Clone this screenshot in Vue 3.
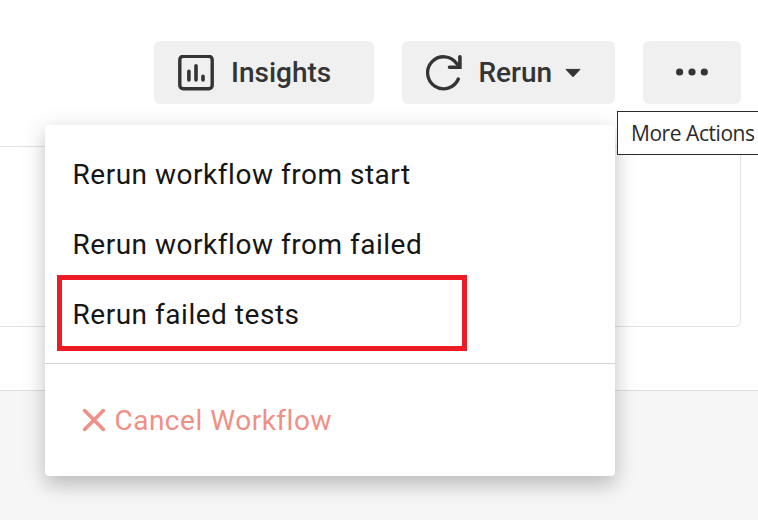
<script setup>
const rerunOptions = [
  { label: 'Rerun workflow from start' },
  { label: 'Rerun workflow from failed' },
  { label: 'Rerun failed tests', highlighted: true },
]
</script>

<template>
  <div class="page">
    <header class="toolbar">
      <button class="btn insights" type="button">
        <svg class="icon" viewBox="0 0 36 36" width="36" height="36">
          <rect x="1.8" y="1.3" width="32.4" height="32.4" rx="3.4" fill="none" stroke="#343434" stroke-width="3.4" />
          <path d="M10.9 16.2v8.8M18 10.8v14.2M25 21.3v3.7" fill="none" stroke="#343434" stroke-width="3.6" stroke-linecap="round" />
        </svg>
        <span>Insights</span>
      </button>
      <button class="btn rerun" type="button">
        <svg class="icon" viewBox="0 0 36 36" width="36" height="36">
          <path d="M32.3 24A16 16 0 1 1 30.7 8.6L33.3 11.8" fill="none" stroke="#343434" stroke-width="3.3" stroke-linecap="round" />
          <path d="M33.9 1.8v10.4H23.5" fill="none" stroke="#343434" stroke-width="3.6" stroke-linecap="round" stroke-linejoin="miter" />
        </svg>
        <span>Rerun</span>
        <svg class="caret" viewBox="0 0 16 10" width="16" height="10">
          <path d="M1 1.4h14L8 8.8z" fill="#343434" stroke="#343434" stroke-width="1" stroke-linejoin="round" />
        </svg>
      </button>
      <button class="btn more" type="button" aria-label="More Actions">
        <svg viewBox="0 0 32 8" width="32" height="8">
          <circle cx="3.6" cy="4" r="3.6" fill="#343434" />
          <circle cx="16" cy="4" r="3.6" fill="#343434" />
          <circle cx="28.3" cy="4" r="3.6" fill="#343434" />
        </svg>
      </button>
    </header>
    <section class="card"></section>
    <footer class="backdrop"></footer>

    <div class="menu">
      <ul class="options">
        <li v-for="option in rerunOptions" :key="option.label" :class="{ highlighted: option.highlighted }">
          <span>{{ option.label }}</span>
        </li>
      </ul>
      <div class="cancel">
        <svg viewBox="0 0 24 24" width="24" height="24">
          <path d="M2.6 2.6l18.8 18.8M21.4 2.6L2.6 21.4" fill="none" stroke="#ef9086" stroke-width="3.6" stroke-linecap="round" />
        </svg>
        <span>Cancel Workflow</span>
      </div>
    </div>
    <div class="tooltip"><span>More Actions</span></div>
  </div>
</template>

<style>
body {
  margin: 0;
  overflow: hidden;
}
</style>

<style scoped>
.page {
  position: relative;
  box-sizing: border-box;
  display: flex;
  flex-direction: column;
  width: 758px;
  height: 520px;
  overflow: hidden;
  background: #fff;
  font-family: Roboto, "Liberation Sans", sans-serif;
}

.toolbar {
  display: flex;
  justify-content: flex-end;
  gap: 28px;
  padding: 41px 17px 42px 0;
}

.btn {
  box-sizing: border-box;
  display: flex;
  align-items: center;
  height: 63px;
  padding: 0 0 0 24px;
  border: 0;
  border-radius: 6px;
  background: #f0f0f0;
  color: #343434;
  font: 500 28px/36px Roboto, "Liberation Sans", sans-serif;
}

.icon {
  flex: none;
  margin-right: 17px;
}

.insights {
  width: 220px;
}

.rerun {
  width: 213px;
}

.rerun .icon {
  margin-right: 16.5px;
}

.caret {
  margin-left: 12.5px;
}

.more {
  justify-content: center;
  width: 98px;
  padding: 0 0 1px;
}

.card {
  box-sizing: border-box;
  width: 741px;
  height: 181px;
  border: solid #e3e3e3;
  border-width: 1px 1px 1px 0;
  border-radius: 0 6px 6px 0;
}

.backdrop {
  flex: 1;
  margin-top: 63px;
  border-top: 1px solid #dfdfdf;
  background: #f6f6f6;
}

.menu {
  position: absolute;
  left: 45px;
  top: 125px;
  width: 570px;
  height: 351px;
  border-radius: 4px;
  background: #fff;
  box-shadow:
    0 10px 18px -1px rgba(0, 0, 0, 0.15),
    0 5px 25px 3px rgba(0, 0, 0, 0.1);
  font-size: 28px;
  letter-spacing: 0.52px;
}

.options {
  box-sizing: border-box;
  height: 239px;
  margin: 0;
  padding: 14px 12px 0;
  border-bottom: 1px solid #d3d3d3;
  list-style: none;
}

.options li {
  box-sizing: border-box;
  display: flex;
  align-items: center;
  height: 70px;
  padding-left: 15.5px;
  color: #161616;
}

.options .highlighted {
  width: 410px;
  height: 76px;
  margin-top: -4px;
  padding: 2px 0 0 10.5px;
  border: 5px solid #ed1c24;
}

.cancel {
  display: flex;
  align-items: center;
  gap: 8.4px;
  height: 112px;
  padding-left: 37px;
  color: #ef9086;
}

.tooltip {
  position: absolute;
  left: 617px;
  top: 111px;
  box-sizing: border-box;
  width: 150px;
  height: 44px;
  padding-left: 13px;
  border: 1px solid #2b2b2b;
  background: #fff;
  color: #2b2b2b;
  font: 21px/42px "Open Sans", "Noto Sans", sans-serif;
  letter-spacing: -0.45px;
  white-space: nowrap;
}
</style>
